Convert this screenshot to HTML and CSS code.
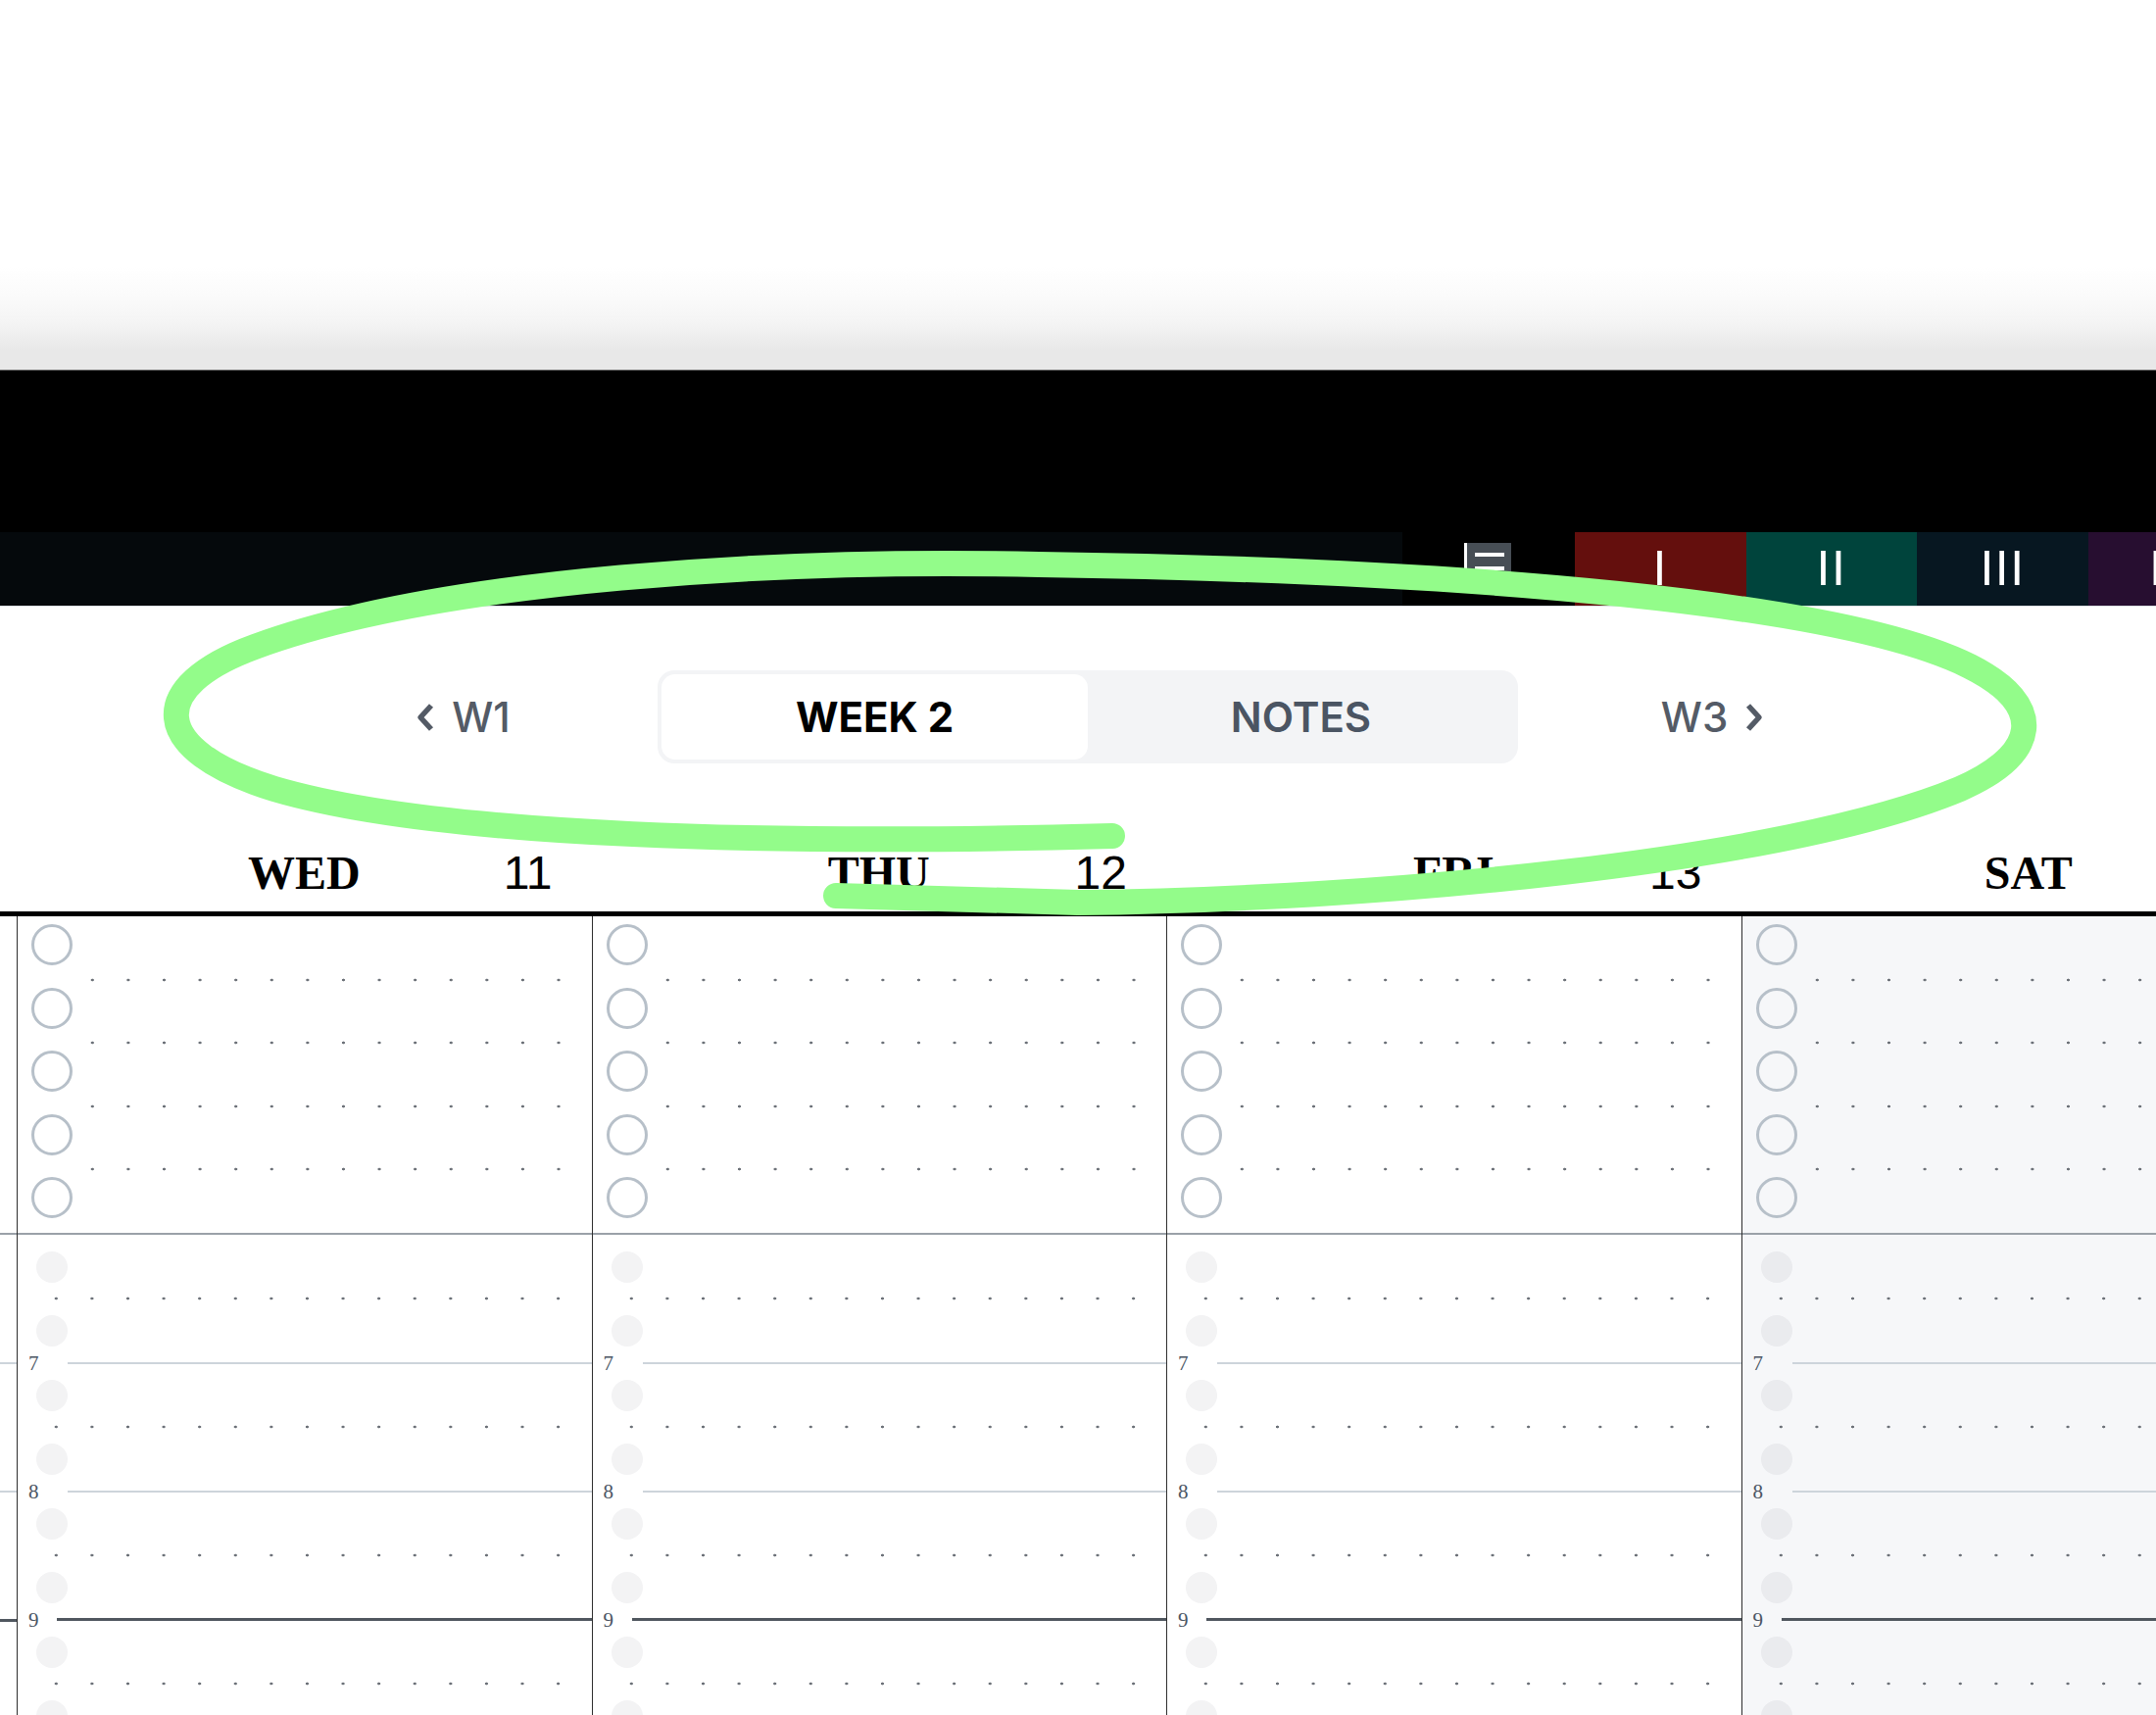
FILE: index.html
```html
<!DOCTYPE html>
<html lang="en">
<head>
<meta charset="utf-8">
<title>Weekly Planner</title>
<link rel="stylesheet" href="styles.css">
</head>
<body>
<div class="page">
  <div class="chrome"></div>
  <div class="band"></div>
  <div class="toolbar">
    <div class="tb-fill"></div>
    <div class="tb-tool"><span class="tb-icon"><i></i><i></i><i></i></span></div>
    <div class="tab tab-1">I</div>
    <div class="tab tab-2">II</div>
    <div class="tab tab-3">III</div>
    <div class="tab tab-4">IV</div>
  </div>

  <nav class="weeknav">
    <div class="navbtn">
      <svg class="chev" width="22" height="30" viewBox="0 0 22 30"><polyline points="17,3 6,15 17,27" fill="none" stroke="#545b66" stroke-width="5.5" stroke-linejoin="round"/></svg>
      <span>W1</span>
    </div>
    <div class="seg">
      <div class="seg-btn active">WEEK 2</div>
      <div class="seg-btn">NOTES</div>
    </div>
    <div class="navbtn">
      <span>W3</span>
      <svg class="chev" width="22" height="30" viewBox="0 0 22 30"><polyline points="5,3 16,15 5,27" fill="none" stroke="#545b66" stroke-width="5.5" stroke-linejoin="round"/></svg>
    </div>
  </nav>

  <div class="dayheads">
    <div class="gutter-head"></div>
    <div class="dayhead"><span class="dname">WED</span><span class="dnum">11</span></div>
    <div class="dayhead"><span class="dname">THU</span><span class="dnum">12</span></div>
    <div class="dayhead"><span class="dname">FRI</span><span class="dnum">13</span></div>
    <div class="dayhead"><span class="dname">SAT</span><span class="dnum">14</span></div>
  </div>

  <div class="board">
    <div class="gutter">
      <div class="tasks"></div>
      <div class="hours">
        <div class="hslot"></div>
        <div class="hslot"></div>
        <div class="hour"><span class="hline"></span></div>
        <div class="hslot"></div>
        <div class="hslot"></div>
        <div class="hour"><span class="hline"></span></div>
        <div class="hslot"></div>
        <div class="hslot"></div>
        <div class="hour strong"><span class="hline"></span></div>
        <div class="hslot"></div>
        <div class="hslot"></div>
      </div>
    </div>

    <div class="day">
      <div class="tasks">
        <div class="slot"><span class="check"></span></div>
        <div class="dots"></div>
        <div class="slot"><span class="check"></span></div>
        <div class="dots"></div>
        <div class="slot"><span class="check"></span></div>
        <div class="dots"></div>
        <div class="slot"><span class="check"></span></div>
        <div class="dots"></div>
        <div class="slot"><span class="check"></span></div>
      </div>
      <div class="hours">
        <div class="hslot"><span class="ghost"></span></div>
        <div class="dots"></div>
        <div class="hslot"><span class="ghost"></span></div>
        <div class="hour"><span class="hlabel">7</span><span class="hline"></span></div>
        <div class="hslot"><span class="ghost"></span></div>
        <div class="dots"></div>
        <div class="hslot"><span class="ghost"></span></div>
        <div class="hour"><span class="hlabel">8</span><span class="hline"></span></div>
        <div class="hslot"><span class="ghost"></span></div>
        <div class="dots"></div>
        <div class="hslot"><span class="ghost"></span></div>
        <div class="hour strong"><span class="hlabel">9</span><span class="hline"></span></div>
        <div class="hslot"><span class="ghost"></span></div>
        <div class="dots"></div>
        <div class="hslot"><span class="ghost"></span></div>
      </div>
    </div>

    <div class="day">
      <div class="tasks">
        <div class="slot"><span class="check"></span></div>
        <div class="dots"></div>
        <div class="slot"><span class="check"></span></div>
        <div class="dots"></div>
        <div class="slot"><span class="check"></span></div>
        <div class="dots"></div>
        <div class="slot"><span class="check"></span></div>
        <div class="dots"></div>
        <div class="slot"><span class="check"></span></div>
      </div>
      <div class="hours">
        <div class="hslot"><span class="ghost"></span></div>
        <div class="dots"></div>
        <div class="hslot"><span class="ghost"></span></div>
        <div class="hour"><span class="hlabel">7</span><span class="hline"></span></div>
        <div class="hslot"><span class="ghost"></span></div>
        <div class="dots"></div>
        <div class="hslot"><span class="ghost"></span></div>
        <div class="hour"><span class="hlabel">8</span><span class="hline"></span></div>
        <div class="hslot"><span class="ghost"></span></div>
        <div class="dots"></div>
        <div class="hslot"><span class="ghost"></span></div>
        <div class="hour strong"><span class="hlabel">9</span><span class="hline"></span></div>
        <div class="hslot"><span class="ghost"></span></div>
        <div class="dots"></div>
        <div class="hslot"><span class="ghost"></span></div>
      </div>
    </div>

    <div class="day">
      <div class="tasks">
        <div class="slot"><span class="check"></span></div>
        <div class="dots"></div>
        <div class="slot"><span class="check"></span></div>
        <div class="dots"></div>
        <div class="slot"><span class="check"></span></div>
        <div class="dots"></div>
        <div class="slot"><span class="check"></span></div>
        <div class="dots"></div>
        <div class="slot"><span class="check"></span></div>
      </div>
      <div class="hours">
        <div class="hslot"><span class="ghost"></span></div>
        <div class="dots"></div>
        <div class="hslot"><span class="ghost"></span></div>
        <div class="hour"><span class="hlabel">7</span><span class="hline"></span></div>
        <div class="hslot"><span class="ghost"></span></div>
        <div class="dots"></div>
        <div class="hslot"><span class="ghost"></span></div>
        <div class="hour"><span class="hlabel">8</span><span class="hline"></span></div>
        <div class="hslot"><span class="ghost"></span></div>
        <div class="dots"></div>
        <div class="hslot"><span class="ghost"></span></div>
        <div class="hour strong"><span class="hlabel">9</span><span class="hline"></span></div>
        <div class="hslot"><span class="ghost"></span></div>
        <div class="dots"></div>
        <div class="hslot"><span class="ghost"></span></div>
      </div>
    </div>

    <div class="day weekend">
      <div class="tasks">
        <div class="slot"><span class="check"></span></div>
        <div class="dots"></div>
        <div class="slot"><span class="check"></span></div>
        <div class="dots"></div>
        <div class="slot"><span class="check"></span></div>
        <div class="dots"></div>
        <div class="slot"><span class="check"></span></div>
        <div class="dots"></div>
        <div class="slot"><span class="check"></span></div>
      </div>
      <div class="hours">
        <div class="hslot"><span class="ghost"></span></div>
        <div class="dots"></div>
        <div class="hslot"><span class="ghost"></span></div>
        <div class="hour"><span class="hlabel">7</span><span class="hline"></span></div>
        <div class="hslot"><span class="ghost"></span></div>
        <div class="dots"></div>
        <div class="hslot"><span class="ghost"></span></div>
        <div class="hour"><span class="hlabel">8</span><span class="hline"></span></div>
        <div class="hslot"><span class="ghost"></span></div>
        <div class="dots"></div>
        <div class="hslot"><span class="ghost"></span></div>
        <div class="hour strong"><span class="hlabel">9</span><span class="hline"></span></div>
        <div class="hslot"><span class="ghost"></span></div>
        <div class="dots"></div>
        <div class="hslot"><span class="ghost"></span></div>
      </div>
    </div>
  </div>
</div>

<svg class="annot" width="2200" height="1750" viewBox="0 0 2200 1750">
  <path d="M1135 853 C800 862 450 855 280 805 C150 765 150 700 260 660 C450 590 800 570 1060 576 C1500 582 1880 615 2010 680 C2090 720 2080 770 2000 805 C1820 880 1400 918 1100 921 L853 914" fill="none" stroke="#93fc8a" stroke-width="26" stroke-linecap="round" stroke-linejoin="round"/>
</svg>
</body>
</html>
```

FILE: styles.css
```css
html, body {
  margin: 0;
  padding: 0;
}

body {
  width: 2200px;
  height: 1750px;
  overflow: hidden;
  position: relative;
  background: #fff;
  font-family: "Liberation Sans", Arial, sans-serif;
}

.page {
  width: 2200px;
}

/* top browser chrome */
.chrome {
  height: 377px;
  background: linear-gradient(to bottom, #fff 0, #fff 272px, #fbfbfb 300px, #f4f4f4 330px, #e8e8e8 358px, #e8e8e8 377px);
  border-bottom: 1px solid #8d8d8d;
}

.band {
  height: 165px;
  background: #000;
}

/* toolbar with tabs */
.toolbar {
  display: flex;
  height: 75px;
  border-bottom: 1px solid #dde1e5;
  overflow: hidden;
}

.tb-fill {
  flex: none;
  width: 1431px;
  background: #05090c;
}

.tb-tool {
  flex: none;
  width: 176px;
  background: #000;
  box-sizing: border-box;
  padding: 11px 0 0 63px;
}

.tb-icon {
  display: flex;
  flex-direction: column;
  gap: 10px;
  width: 48px;
  height: 44px;
  box-sizing: border-box;
  padding: 10px 0 0 8px;
  background: #474e55;
  border-left: 3px solid #fff;
}

.tb-icon i {
  display: block;
  width: 30px;
  height: 4px;
  background: #fff;
}

.tab {
  flex: none;
  width: 174.6px;
  text-align: center;
  color: #fff;
  font: 400 50px/75px "Liberation Sans", Arial, sans-serif;
  letter-spacing: 1.5px;
}

.tab-1 { background: #640f0d; }
.tab-2 { background: #00443c; }
.tab-3 { background: #071721; }
.tab-4 { background: #270e30; }

/* week navigation */
.weeknav {
  display: flex;
  justify-content: center;
  align-items: center;
  gap: 49px;
  padding: 65px 0 0 20px;
}

.navbtn {
  flex: none;
  width: 300px;
  display: flex;
  justify-content: center;
  align-items: center;
  gap: 16px;
  font: 500 42px/1 Inter, "Noto Sans", sans-serif;
  color: #545b66;
}

.chev {
  display: block;
}

.seg {
  flex: none;
  display: flex;
  width: 878px;
  height: 95px;
  box-sizing: border-box;
  padding: 4px;
  background: #f3f4f6;
  border-radius: 17px;
}

.seg-btn {
  flex: 1;
  display: flex;
  align-items: center;
  justify-content: center;
  border-radius: 14px;
  font: 600 42px/1 Inter, "Noto Sans", sans-serif;
  color: #4b5563;
}

.seg-btn.active {
  background: #fff;
  color: #000;
  font-weight: 700;
}

/* day headers */
.dayheads {
  display: grid;
  grid-template-columns: 17px repeat(4, 586.5px);
  height: 151px;
  border-bottom: 5px solid #000;
}

.dayhead {
  display: grid;
  grid-template-columns: 1fr auto 1fr;
  align-items: end;
  padding-bottom: 15px;
  color: #000;
}

.dname {
  grid-column: 2;
  font: 700 48px/48px "Liberation Serif", "Times New Roman", serif;
}

.dnum {
  grid-column: 3;
  justify-self: end;
  padding-right: 40px;
  font: 400 48px/48px "Liberation Sans", Arial, sans-serif;
}

/* board */
.board {
  display: grid;
  grid-template-columns: 17px repeat(4, 586.5px);
}

.day {
  border-left: 1px solid #2e2e2e;
}

.day.weekend {
  background: #f6f7f9;
}

.tasks {
  display: flex;
  flex-direction: column;
}

.gutter .tasks {
  height: 323px;
}

.slot {
  flex: none;
  height: 64.6px;
  box-sizing: border-box;
  padding: 8px 0 0 14px;
}

.check {
  display: block;
  width: 42px;
  height: 42px;
  box-sizing: border-box;
  border: 3px solid #b7c0c9;
  border-radius: 50%;
}

.dots {
  flex: none;
  height: 4px;
  margin: -2px 0;
  background: radial-gradient(circle, #6c7178 0, #6c7178 1.1px, transparent 1.7px) 0 0 / 36.6px 4px repeat-x;
}

.tasks .dots {
  margin-left: 58px;
}

.hours .dots {
  margin-left: 21px;
}

.hours {
  display: flex;
  flex-direction: column;
  border-top: 2px solid #9aa1a8;
}

.hslot {
  flex: none;
  height: 65.5px;
  box-sizing: border-box;
  display: flex;
  align-items: center;
  padding-left: 19px;
}

.ghost {
  display: block;
  width: 32px;
  height: 32px;
  border-radius: 50%;
  background: rgba(17, 24, 39, 0.05);
}

.hour {
  flex: none;
  height: 0;
  display: flex;
  align-items: center;
}

.hlabel {
  flex: none;
  width: 51px;
  box-sizing: border-box;
  padding-left: 11px;
  font: 400 21px/20px "Liberation Serif", "Times New Roman", serif;
  color: #4b5563;
}

.hline {
  flex: 1;
  height: 1.5px;
  background: #cdd4db;
}

.hour.strong .hlabel {
  width: 40px;
}

.hour.strong .hline {
  height: 3px;
  background: #50575f;
}

/* annotation overlay */
.annot {
  position: absolute;
  left: 0;
  top: 0;
  pointer-events: none;
}
```
